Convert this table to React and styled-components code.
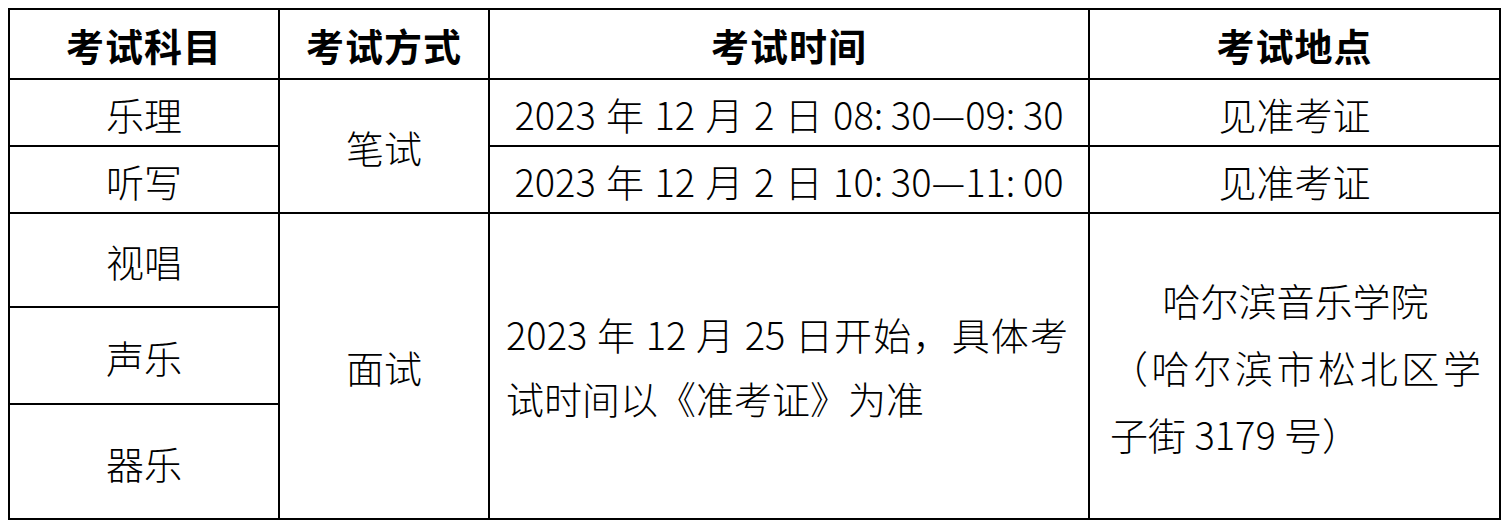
import React from 'react'
import styled, { createGlobalStyle } from 'styled-components'

const Global = createGlobalStyle`
  body {
    margin: 0;
    background: #fff;
  }
`

const Page = styled.div`
  padding: 8px;
  font-family: "Noto Sans CJK SC", "Noto Sans", sans-serif;
  color: #000;
`

const Sheet = styled.table`
  border-collapse: collapse;
  table-layout: fixed;
  width: 1491px;
  border: 2px solid #000;
`

const Row = styled.tr`
  height: ${p => p.$h}px;
`

const HeadCell = styled.th`
  border: 2px solid #000;
  padding: 2px 0 0;
  font-size: 38px;
  font-weight: 700;
  letter-spacing: 1px;
  text-align: center;
  vertical-align: middle;
  line-height: 1;
`

const Cell = styled.td`
  border: 2px solid #000;
  padding: ${p => p.$pad || '2px 0 0'};
  font-size: 38px;
  font-weight: 300;
  word-spacing: ${p => p.$ws || 0}px;
  text-align: ${p => p.$align || 'center'};
  vertical-align: middle;
  line-height: 1;
`

const Para = styled.p`
  margin: 0;
  line-height: ${p => p.$lh || 64}px;
  text-align: ${p => p.$align || 'justify'};
`

const cols = [270, 210, 600, 411]

export default function App() {
  return (
    <Page>
      <Global />
      <Sheet>
        <colgroup>
          {cols.map((w, i) => <col key={i} style={{ width: w }} />)}
        </colgroup>
        <tbody>
          <Row $h={70}>
            <HeadCell>考试科目</HeadCell>
            <HeadCell>考试方式</HeadCell>
            <HeadCell>考试时间</HeadCell>
            <HeadCell>考试地点</HeadCell>
          </Row>
          <Row $h={67}>
            <Cell>乐理</Cell>
            <Cell rowSpan={2}>笔试</Cell>
            <Cell $ws={2}>2023 年 12 月 2 日 08:&#8201;30—09:&#8201;30</Cell>
            <Cell>见准考证</Cell>
          </Row>
          <Row $h={67}>
            <Cell>听写</Cell>
            <Cell $ws={2}>2023 年 12 月 2 日 10:&#8201;30—11:&#8201;00</Cell>
            <Cell>见准考证</Cell>
          </Row>
          <Row $h={94}>
            <Cell>视唱</Cell>
            <Cell rowSpan={3}>面试</Cell>
            <Cell rowSpan={3} $align="left" $pad="0 20px 0 16px">
              <Para>2023 年 12 月 25 日开始，具体考试时间以《准考证》为准</Para>
            </Cell>
            <Cell rowSpan={3} $align="left" $pad="0 18px 0 20px">
              <Para $align="center" $lh={67}>哈尔滨音乐学院</Para>
              <Para $lh={67}>（哈尔滨市松北区学子街 3179 号）</Para>
            </Cell>
          </Row>
          <Row $h={97}>
            <Cell>声乐</Cell>
          </Row>
          <Row $h={115}>
            <Cell>器乐</Cell>
          </Row>
        </tbody>
      </Sheet>
    </Page>
  )
}
